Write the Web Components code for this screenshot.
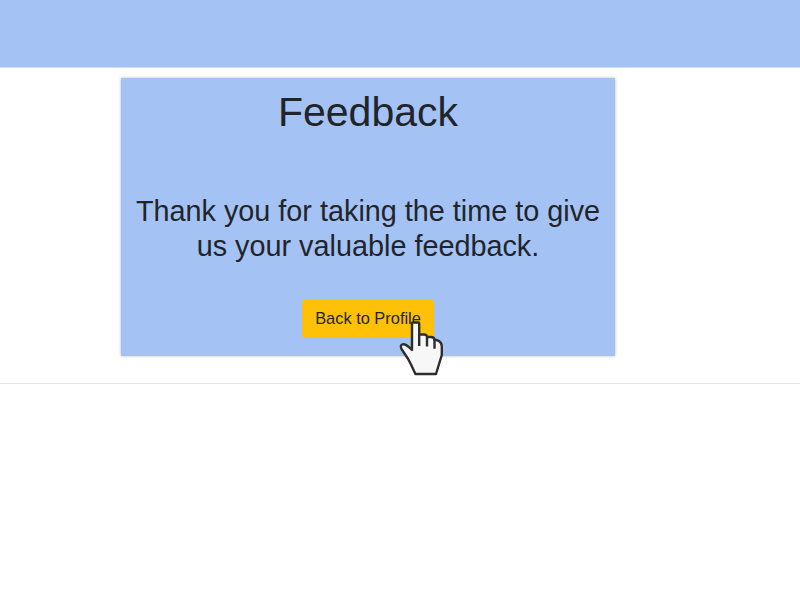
<!DOCTYPE html>
<html lang="en"><head><meta charset="utf-8"><title>Feedback</title>
<style>html,body{margin:0;height:100%;overflow:hidden;background:#fff}body{font-family:"Liberation Sans",sans-serif;color:#212529}</style></head>
<body><feedback-page></feedback-page>
<script>
const define=(name,html)=>customElements.define(name,class extends HTMLElement{constructor(){super();this.attachShadow({mode:"open"}).innerHTML=html;}});
define("top-bar",`<style>:host{display:block;height:67px;background:#a4c2f4;border-bottom:1px solid #cfdaed}</style>`);
define("pointer-hand",`<style>:host{display:block;width:46px;height:58px}svg{display:block}</style>
<svg width="46" height="58" viewBox="0 0 46 58"><path d="M13 31V4.3Q13 3.5 14 3.5H19.3Q20.2 3.5 20.2 4.5V15.5H25Q27.8 15.5 28 18H32Q35.3 18 35.5 21H37.5Q43 22.5 42.8 28V36L37 55H16.4L12 45.5Q9.5 40 5.5 34.5L2.5 30Q.8 26 3.5 25.3C7 24.5 10 28 13 31Z" fill="#f7f7f7" stroke="#2d2d2d" stroke-width="2.4" stroke-linejoin="round"/><path d="M20.2 15V27M28 18V27.5M35.5 21V29.8" fill="none" stroke="#2d2d2d" stroke-width="2.4"/></svg>`);
define("action-button",`<style>:host{display:block;position:relative;width:132px;height:38px}button{all:unset;box-sizing:border-box;width:100%;height:100%;padding-bottom:2px;background:#ffc107;border-radius:3px;font-size:16.4px;line-height:36px;text-align:center;color:#212529;display:block}::slotted(pointer-hand){position:absolute;left:97px;top:19px}</style><button><slot></slot></button><slot name="cursor"></slot>`);
define("feedback-card",`<style>:host{display:flex;box-sizing:border-box;flex-direction:column;align-items:center;width:494px;height:278px;background:#a4c2f4;box-shadow:0 0 3px #bbb;padding-top:9px}h1,p{margin:0;font-weight:400;text-align:center}h1{font-size:41px;line-height:50px}p{font-size:28.8px;line-height:35px;margin:57px 0 36px;white-space:nowrap}</style><h1><slot name="title"></slot></h1><p><slot name="message"></slot></p><slot></slot>`);
define("feedback-page",`<style>:host{display:block}main{box-sizing:border-box;height:316px;padding:10px 0 0 121px;border-bottom:1px solid #e5e5e5}</style><top-bar></top-bar><main><feedback-card><span slot="title">Feedback</span><span slot="message">Thank you for taking the time to give<br>us your valuable feedback.</span><action-button>Back to Profile<pointer-hand slot="cursor"></pointer-hand></action-button></feedback-card></main>`);
</script></body></html>
